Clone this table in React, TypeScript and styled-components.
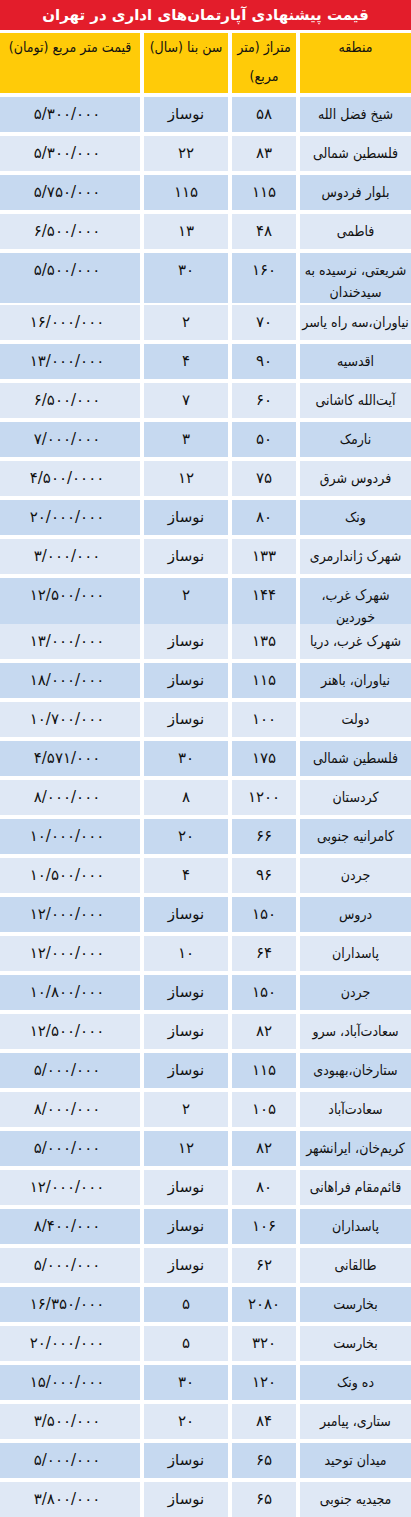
import React from "react";
import styled, { createGlobalStyle } from "styled-components";

const GlobalStyle = createGlobalStyle`
  html, body {
    margin: 0;
    padding: 0;
    background: #ffffff;
  }
`;

const toFa = (s: string) => s.replace(/\d/g, (d) => "۰۱۲۳۴۵۶۷۸۹"[Number(d)]);

type Row = {
  region: string;
  area: string;
  age: string;
  price: string;
  height?: number;
};

const rows: Row[] = [
  { region: "شیخ فضل الله", area: "58", age: "نوساز", price: "5/300/000" },
  { region: "فلسطین شمالی", area: "83", age: "22", price: "5/300/000" },
  { region: "بلوار فردوس", area: "115", age: "115", price: "5/750/000" },
  { region: "فاطمی", area: "48", age: "13", price: "6/500/000" },
  { region: "شریعتی، نرسیده به سیدخندان", area: "160", age: "30", price: "5/500/000", height: 48 },
  { region: "نیاوران،سه راه یاسر", area: "70", age: "2", price: "16/000/000" },
  { region: "اقدسیه", area: "90", age: "4", price: "13/000/000" },
  { region: "آیت‌الله کاشانی", area: "60", age: "7", price: "6/500/000" },
  { region: "نارمک", area: "50", age: "3", price: "7/000/000" },
  { region: "فردوس شرق", area: "75", age: "12", price: "4/500/0000" },
  { region: "ونک", area: "80", age: "نوساز", price: "20/000/000" },
  { region: "شهرک ژاندارمری", area: "133", age: "نوساز", price: "3/000/000" },
  { region: "شهرک غرب، خوردین", area: "144", age: "2", price: "12/500/000", height: 42 },
  { region: "شهرک غرب، دریا", area: "135", age: "نوساز", price: "13/000/000" },
  { region: "نیاوران، باهنر", area: "115", age: "نوساز", price: "18/000/000" },
  { region: "دولت", area: "100", age: "نوساز", price: "10/700/000" },
  { region: "فلسطین شمالی", area: "175", age: "30", price: "4/571/000" },
  { region: "کردستان", area: "1200", age: "8", price: "8/000/000" },
  { region: "کامرانیه جنوبی", area: "66", age: "20", price: "10/000/000" },
  { region: "جردن", area: "96", age: "4", price: "10/500/000" },
  { region: "دروس", area: "150", age: "نوساز", price: "12/000/000" },
  { region: "پاسداران", area: "64", age: "10", price: "12/000/000" },
  { region: "جردن", area: "150", age: "نوساز", price: "10/800/000" },
  { region: "سعادت‌آباد، سرو", area: "82", age: "نوساز", price: "12/500/000" },
  { region: "ستارخان،بهبودی", area: "115", age: "نوساز", price: "5/000/000" },
  { region: "سعادت‌آباد", area: "105", age: "2", price: "8/000/000" },
  { region: "کریم‌خان، ایرانشهر", area: "82", age: "12", price: "5/000/000" },
  { region: "قائم‌مقام فراهانی", area: "80", age: "نوساز", price: "12/000/000" },
  { region: "پاسداران", area: "106", age: "نوساز", price: "8/400/000" },
  { region: "طالقانی", area: "62", age: "نوساز", price: "5/000/000" },
  { region: "بخارست", area: "2080", age: "5", price: "16/350/000" },
  { region: "بخارست", area: "320", age: "5", price: "20/000/000" },
  { region: "ده ونک", area: "120", age: "30", price: "15/000/000" },
  { region: "ستاری، پیامبر", area: "84", age: "20", price: "3/500/000" },
  { region: "میدان توحید", area: "65", age: "نوساز", price: "5/000/000" },
  { region: "مجیدیه جنوبی", area: "65", age: "نوساز", price: "3/800/000" },
];

const Page = styled.div`
  width: 411px;
  direction: rtl;
  font-family: "DejaVu Sans", "Noto Sans", sans-serif;
  color: #111111;
  background: #ffffff;
`;

const TitleBar = styled.div`
  height: 30px;
  background: #e31d2b;
  color: #ffffff;
  font-size: 15px;
  font-weight: bold;
  display: flex;
  align-items: center;
  justify-content: center;
`;

const Table = styled.div`
  display: flex;
  flex-direction: column;
  gap: 4px;
  margin-top: 3px;
`;

const GridRow = styled.div<{ $height: number }>`
  display: grid;
  grid-template-columns: 111px 64px 84px 140px;
  column-gap: 4px;
  height: ${(p) => p.$height}px;
`;

const HeadCell = styled.div`
  background: #ffcb08;
  text-align: center;
  font-family: "DejaVu Sans Condensed", "DejaVu Sans", sans-serif;
  font-size: 14px;
  line-height: 29px;
  padding: 0 2px;
`;

const Cell = styled.div<{ $dark: boolean }>`
  background: ${(p) => (p.$dark ? "#c6d9f0" : "#dfe8f5")};
  text-align: center;
  font-size: 15px;
  line-height: 21px;
  padding: 7px 2px 0;
  white-space: nowrap;
`;

const PriceCell = styled(Cell)`
  letter-spacing: 2px;
  padding-right: 8px;
`;

const RegionCell = styled(Cell)`
  white-space: normal;
  font-family: "DejaVu Sans Condensed", "DejaVu Sans", sans-serif;
  font-size: 14px;
  line-height: 22px;
  padding-top: 6px;
`;

const Spill = styled.span`
  position: relative;
  z-index: 1;
`;

export default function App() {
  return (
    <>
      <GlobalStyle />
      <Page>
        <TitleBar>قیمت پیشنهادی آپارتمان‌های اداری در تهران</TitleBar>
        <Table>
          <GridRow $height={60}>
            <HeadCell>منطقه</HeadCell>
            <HeadCell>متراژ (متر مربع)</HeadCell>
            <HeadCell>سن بنا (سال)</HeadCell>
            <HeadCell>قیمت متر مربع (تومان)</HeadCell>
          </GridRow>
          {rows.map((r, i) => {
            const dark = i % 2 === 0;
            return (
              <GridRow key={i} $height={r.height ?? 35}>
                <RegionCell $dark={dark}>
                  <Spill>{r.region}</Spill>
                </RegionCell>
                <Cell $dark={dark}>{toFa(r.area)}</Cell>
                <Cell $dark={dark}>{toFa(r.age)}</Cell>
                <PriceCell $dark={dark}>{toFa(r.price)}</PriceCell>
              </GridRow>
            );
          })}
        </Table>
      </Page>
    </>
  );
}
